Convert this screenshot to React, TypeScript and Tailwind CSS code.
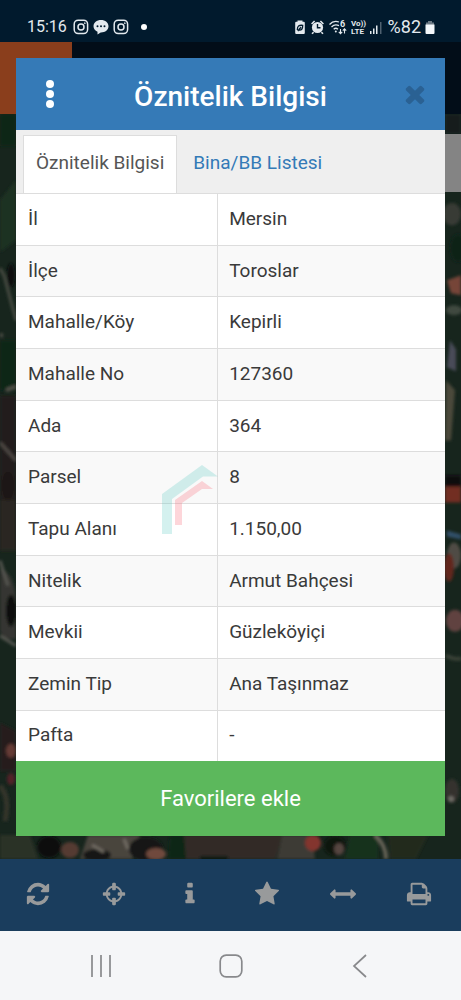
import type { ReactNode } from "react";

const rows = [
  ["İl", "Mersin"],
  ["İlçe", "Toroslar"],
  ["Mahalle/Köy", "Kepirli"],
  ["Mahalle No", "127360"],
  ["Ada", "364"],
  ["Parsel", "8"],
  ["Tapu Alanı", "1.150,00"],
  ["Nitelik", "Armut Bahçesi"],
  ["Mevkii", "Güzleköyiçi"],
  ["Zemin Tip", "Ana Taşınmaz"],
  ["Pafta", "-"],
];

const tools = [
  {
    label: "Yenile",
    path: "M1639 1056q0 5-1 7-64 268-268 434.5t-478 166.5q-146 0-282.5-55t-243.500-157l-129 129q-19 19-45 19t-45-19-19-45v-448q0-26 19-45t45-19h448q26 0 45 19t19 45-19 45l-137 137q71 66 161 102t187 36q134 0 250-65t186-179q11-17 53-117 8-23 30-23h192q13 0 22.5 9.5t9.5 22.5zm25-800v448q0 26-19 45t-45 19h-448q-26 0-45-19t-19-45 19-45l138-138q-148-137-349-137-134 0-250 65t-186 179q-11 17-53 117-8 23-30 23h-199q-13 0-22.5-9.5t-9.5-22.5v-7q65-268 270-434.5t480-166.5q146 0 284 55.5t245 156.5l130-129q19-19 45-19t45 19 19 45z",
  },
  {
    label: "Konum",
    path: "M1325 1024h-109q-26 0-45-19t-19-45v-128q0-26 19-45t45-19h109q-32-108-112.5-188.500t-188.500-112.500v109q0 26-19 45t-45 19h-128q-26 0-45-19t-19-45v-109q-108 32-188.500 112.500t-112.500 188.500h109q26 0 45 19t19 45v128q0 26-19 45t-45 19h-109q32 108 112.500 188.500t188.500 112.500v-109q0-26 19-45t45-19h128q26 0 45 19t19 45v109q108-32 188.500-112.500t112.500-188.500zm339-192v128q0 26-19 45t-45 19h-143q-37 161-154.500 278.500t-278.500 154.500v143q0 26-19 45t-45 19h-128q-26 0-45-19t-19-45v-143q-161-37-278.500-154.500t-154.500-278.500h-143q-26 0-45-19t-19-45v-128q0-26 19-45t45-19h143q37-161 154.500-278.500t278.500-154.500v-143q0-26 19-45t45-19h128q26 0 45 19t19 45v143q161 37 278.500 154.500t154.500 278.500h143q26 0 45 19t19 45z",
  },
  {
    label: "Bilgi",
    path: "M1216 1344v128q0 26-19 45t-45 19h-512q-26 0-45-19t-19-45v-128q0-26 19-45t45-19h64v-384h-64q-26 0-45-19t-19-45v-128q0-26 19-45t45-19h384q26 0 45 19t19 45v576h64q26 0 45 19t19 45zm-128-1152v192q0 26-19 45t-45 19h-256q-26 0-45-19t-19-45v-192q0-26 19-45t45-19h256q26 0 45 19t19 45z",
  },
  {
    label: "Favoriler",
    path: "M1728 647q0 22-26 48l-363 354 86 500q1 7 1 20 0 21-10.5 35.5t-30.500 14.500q-19 0-40-12l-449-236-449 236q-22 12-40 12-21 0-31.500-14.500t-10.500-35.500q0-6 2-20l86-500-364-354q-25-27-25-48 0-37 56-46l502-73 225-455q19-41 49-41t49 41l225 455 502 73q56 9 56 46z",
  },
  {
    label: "Ölçüm",
    path: "M1792 896q0 26-19 45l-256 256q-19 19-45 19t-45-19-19-45v-128h-1024v128q0 26-19 45t-45 19-45-19l-256-256q-19-19-19-45t19-45l256-256q19-19 45-19t45 19 19 45v128h1024v-128q0-26 19-45t45-19 45 19l256 256q19 19 19 45z",
  },
  {
    label: "Yazdır",
    path: "M448 1536h896v-256h-896v256zm0-640h896v-384h-160q-40 0-68-28t-28-68v-160h-640v640zm1152 64q0-26-19-45t-45-19-45 19-19 45 19 45 45 19 45-19 19-45zm128 0v416q0 13-9.500 22.500t-22.500 9.500h-224v160q0 40-28 68t-68 28h-960q-40 0-68-28t-28-68v-160h-224q-13 0-22.500-9.500t-9.500-22.500v-416q0-79 56.500-135.500t135.500-56.500h64v-544q0-40 28-68t68-28h672q40 0 88 20t76 48l152 152q28 28 48 76t20 88v256h64q79 0 135.500 56.500t56.500 135.500z",
  },
];

const closePath =
  "M1490 1322q0 40-28 68l-136 136q-28 28-68 28t-68-28l-294-294-294 294q-28 28-68 28t-68-28l-136-136q-28-28-28-68t28-68l294-294-294-294q-28-28-28-68t28-68l136-136q28-28 68-28t68 28l294 294 294-294q28-28 68-28t68 28l136 136q28 28 28 68t-28 68l-294 294 294 294q28 28 28 68z";

function Glyph({ path, className }: { path: string; className: string }) {
  return (
    <svg viewBox="0 0 1792 1792" fill="currentColor" className={className} aria-hidden="true">
      <path d={path} />
    </svg>
  );
}

function InstagramIcon() {
  return (
    <svg viewBox="0 0 16 16" className="size-4" fill="none" stroke="currentColor" strokeWidth="1.5" aria-hidden="true">
      <rect x="1.2" y="1.2" width="13.400" height="13.400" rx="4" />
      <circle cx="8" cy="8" r="3" />
      <circle cx="11.800" cy="4.200" r="0.500" fill="currentColor" strokeWidth="0.800" />
    </svg>
  );
}

function StatusBar() {
  return (
    <div className="h-[42px] bg-[#011a2d] pt-3 pl-[27px] pr-[26px] flex justify-between text-[#e3e9ee]">
      <div className="flex items-center h-[30px]">
        <span className="text-[16px] leading-5 w-[46px]">15:16</span>
        <div className="flex items-center gap-1">
          <InstagramIcon />
          <svg viewBox="0 0 16 16" className="size-4" fill="currentColor" aria-hidden="true">
            <path d="M8 1C3.700 1 .5 3.700.5 7.200c0 2.500 1.600 4.500 4 5.500v2.800l3.200-2.100C12.200 13.500 15.500 10.800 15.500 7.200 15.500 3.700 12.300 1 8 1z" />
            <g fill="#011a2d">
              <circle cx="4.500" cy="7.300" r="1" />
              <circle cx="8" cy="7.300" r="1" />
              <circle cx="11.500" cy="7.300" r="1" />
            </g>
          </svg>
          <InstagramIcon />
        </div>
        <span className="ml-3 size-[6px] rounded-full bg-white" />
      </div>
      <div className="flex items-center h-[30px]">
        <svg viewBox="0 0 90 16" className="w-[90px] h-4" fill="currentColor" aria-hidden="true">
          <path d="M3.500 1.500h5v1.300h1.300a1 1 0 0 1 1 1V14a1 1 0 0 1-1 1H2.200a1 1 0 0 1-1-1V3.800a1 1 0 0 1 1-1h1.300z" />
          <path d="M3.300 11c0-4 1.500-5 5.400-4.700C8.800 10 7.500 11.500 4.700 10.900L3.800 12M4.700 10.700 7 8.300" fill="none" stroke="#011a2d" strokeWidth="1.300" />
          <circle cx="23.500" cy="8.500" r="5.600" />
          <path d="m17.600 5 3-3M29.400 5l-3-3M19.600 13.200 18 14.800M27.400 13.200l1.600 1.600" stroke="currentColor" strokeWidth="1.600" />
          <path d="M23.500 5v3.800h3" fill="none" stroke="#011a2d" strokeWidth="1.400" />
          <g fill="none" stroke="currentColor" strokeWidth="1.300">
            <path d="M35.500 5.500c2.500-2.800 6.500-3.500 9.500-2.500M37.500 8c2-2 5-2.500 7.500-1.300M39.700 10.300c1.200-1.200 3-1.200 4.200 0" />
            <path d="M46.500 10v4.500M44.800 12.800l1.700 1.900 1.700-1.900M50.500 14.500V10M48.800 11.600l1.700-1.900 1.700 1.900" strokeWidth="1.100" />
          </g>
          <circle cx="41.800" cy="12.500" r="1" />
          <text x="46" y="8" fontSize="9" fontWeight="700" fontFamily="Roboto, sans-serif">6</text>
          <text x="57" y="7" fontSize="8" fontWeight="700" fontFamily="Roboto, sans-serif">Vo))</text>
          <text x="57" y="15" fontSize="8" fontWeight="700" fontFamily="Roboto, sans-serif">LTE</text>
          <path d="M76 12h1.500v3H76zM79 9.500h1.500V15H79zM82 6.500h1.500V15H82z" />
          <path d="M86 3h1.500v12H86z" opacity="0.350" />
        </svg>
        <span className="text-[18px] leading-5 ml-1">%82</span>
        <svg viewBox="0 0 10 16" className="w-[10px] h-4 ml-1" aria-hidden="true">
          <path d="M3 2h4v1.500h2V6H1V3.500h2z" fill="#6c7984" />
          <path d="M.5 5.500h9V14a1 1 0 0 1-1 1h-7a1 1 0 0 1-1-1z" fill="#f4f7fa" />
        </svg>
      </div>
    </div>
  );
}

// Dimmed aerial imagery behind the dialog
function SatelliteMap() {
  return (
    <svg viewBox="0 114 461 744" preserveAspectRatio="none" className="absolute inset-0 size-full" aria-hidden="true">
      <defs>
        <filter id="soft" x="-5%" y="-5%" width="110%" height="110%">
          <feGaussianBlur stdDeviation="1.800" />
        </filter>
      </defs>
      <rect y="114" width="461" height="744" fill="#17251d" />
      <g filter="url(#soft)">
        <path d="M0 114h16v32H0zM0 340h16v50H0z" fill="#0b2619" />
        <path d="M0 395h16v130H0z" fill="#241f1c" />
        <path d="M0 200 16 180v60l-16 12z" fill="#1c3021" />
        <path d="M0 268 4 275 16 320" stroke="#474c42" strokeWidth="3" fill="none" />
        <path d="M0 442 16 460" stroke="#4f4945" strokeWidth="3" fill="none" />
        <path d="M0 335h3M6 390l10-4" stroke="#4f4f46" strokeWidth="4" />
        <ellipse cx="11" cy="275" rx="4" ry="12" fill="#090e10" />
        <ellipse cx="8" cy="485" rx="6" ry="14" fill="#1e1512" />
        <path d="M0 500h16v50H0z" fill="#292520" />
        <path d="M0 568q14 4 16 30v40Q2 640 0 630z" fill="#343630" />
        <ellipse cx="11" cy="610" rx="5" ry="16" fill="#0c0e0d" />
        <path d="M0 560 8 585M0 635l16 10" stroke="#565751" strokeWidth="3" />
        <path d="M0 722 16 730v40H0z" fill="#251e1b" />
        <ellipse cx="11" cy="750" rx="5" ry="7" fill="#653b36" />
        <ellipse cx="11" cy="778" rx="4" ry="6" fill="#512027" />
        <path d="M0 785q10 10 5 35" stroke="#35352a" strokeWidth="5" fill="none" />
        <path d="M445 114h16v20h-16z" fill="#171d1c" />
        <ellipse cx="452" cy="214" rx="9" ry="11" fill="#393b35" />
        <ellipse cx="458" cy="248" rx="8" ry="14" fill="#0d2117" />
        <path d="m447 280 14-5v20l-10-2z" fill="#764439" />
        <ellipse cx="454" cy="310" rx="8" ry="5" fill="#414940" />
        <path d="m450 340 6 9v22l-9-4z" fill="#484c58" />
        <path d="m446 380 9 10-4 50h-6z" fill="#4b493a" />
        <path d="M445 475h16v11h-16z" fill="#0f0c11" />
        <path d="M445 486h16v16h-16z" fill="#722e22" />
        <path d="M447 530 461 534v5l-14-3z" fill="#315069" />
        <ellipse cx="454" cy="555" rx="7" ry="13" fill="#504c45" />
        <ellipse cx="449" cy="567" rx="5" ry="14" fill="#62251f" />
        <ellipse cx="455" cy="620" rx="9" ry="11" fill="#60423f" />
        <path d="M446 655q12 5 15 2" stroke="#3a4338" strokeWidth="4" fill="none" />
        <ellipse cx="452" cy="790" rx="7" ry="12" fill="#34332e" />
        <ellipse cx="451" cy="798" rx="3" ry="3" fill="#6e6b65" />
        <path d="M0 834h30l8 24H0z" fill="#2b3025" />
        <path d="M88 834h52l-8 24H80z" fill="#49443e" />
        <ellipse cx="49" cy="846" rx="12" ry="11" fill="#080d0a" />
        <ellipse cx="70" cy="849" rx="9" ry="8" fill="#553a31" />
        <ellipse cx="97" cy="854" rx="14" ry="6" fill="#161912" />
        <path d="m92 844 12 7M124 838l4 10" stroke="#716c63" strokeWidth="3" />
        <ellipse cx="146" cy="848" rx="17" ry="12" fill="#121713" />
        <ellipse cx="156" cy="853" rx="10" ry="6" fill="#704a3e" />
        <path d="M170 834h18v24h-20z" fill="#102814" />
        <path d="M184 834h98l-6 24h-90z" fill="#332b27" />
        <path d="M200 857h28" stroke="#111411" strokeWidth="4" />
        <path d="M282 834h30l3 24h-38z" fill="#3c3b35" />
        <ellipse cx="313" cy="842" rx="8" ry="8" fill="#83342d" />
        <ellipse cx="335" cy="845" rx="11" ry="10" fill="#10120f" />
        <ellipse cx="339" cy="848" rx="5" ry="6" fill="#544540" />
        <path d="M350 834h28v24h-33z" fill="#17311d" />
        <path d="M375 834q11 10 11 24" stroke="#666356" strokeWidth="4" fill="none" />
        <path d="M388 834h40l-12 24h-26z" fill="#24291f" />
      </g>
    </svg>
  );
}

function Toolbar() {
  return (
    <div className="h-[72px] bg-[#1a3d5d] pr-1 pb-[2px] grid grid-cols-6 text-[#989a9b]">
      {tools.map((tool) => (
        <button key={tool.label} type="button" aria-label={tool.label} className="flex items-center justify-center">
          <Glyph path={tool.path} className="size-[26px]" />
        </button>
      ))}
    </div>
  );
}

function NavButton({ label, children }: { label: string; children: ReactNode }) {
  return (
    <button type="button" aria-label={label} className="flex w-[130px] items-center justify-center">
      <svg viewBox="0 0 24 24" className="size-6" fill="none" stroke="#88898c" strokeWidth="1.700" aria-hidden="true">
        {children}
      </svg>
    </button>
  );
}

function SystemNav() {
  return (
    <div className="h-[69px] bg-[#f5f6f8] flex justify-center">
      <NavButton label="Son uygulamalar">
        <path d="M3 1v22M12 1v22M21 1v22" />
      </NavButton>
      <NavButton label="Ana ekran">
        <rect x="1.200" y="1.200" width="21.600" height="21.600" rx="6" />
      </NavButton>
      <NavButton label="Geri">
        <path d="M17 1 5 12l12 11" />
      </NavButton>
    </div>
  );
}

function AttributeTable() {
  return (
    <div className="relative">
      <table className="w-full h-[568px] table-fixed border-collapse text-[19px] leading-6 text-[#3a3a3a]">
        <tbody>
          {rows.map(([name, value]) => (
            <tr key={name} className="odd:bg-white even:bg-[#f9f9f9] border-t border-[#ddd]">
              <th scope="row" className="w-[47%] pl-3 pb-px text-left font-normal border-r border-[#ddd]">
                {name}
              </th>
              <td className="pl-[11px] pb-px">{value}</td>
            </tr>
          ))}
        </tbody>
      </table>
      <svg viewBox="0 0 56 70" className="pointer-events-none absolute left-[146px] top-[272px] w-14 h-[70px]" aria-hidden="true">
        <path d="M0 69V29L40 0l16 11.500H41L10 34v35z" fill="#61cdc3" opacity="0.270" />
        <path d="M13 60V35l27-19 11 8H40L20 38v22z" fill="#fa7683" opacity="0.300" />
      </svg>
    </div>
  );
}

function AttributeDialog() {
  return (
    <section role="dialog" aria-label="Öznitelik Bilgisi" className="absolute inset-x-4 top-[58px] bg-white">
      <header className="h-[72px] bg-[#357ab7] flex items-center pl-4 pr-3 text-white">
        <button type="button" aria-label="Menü" className="flex w-9 flex-col items-center gap-[2px]">
          <span className="size-2 rounded-full bg-white" />
          <span className="size-2 rounded-full bg-white" />
          <span className="size-2 rounded-full bg-white" />
        </button>
        <h1 className="flex-1 pt-[6px] pr-1 text-center text-[28px] leading-9 font-medium">Öznitelik Bilgisi</h1>
        <button type="button" aria-label="Kapat" className="flex w-9 justify-center text-[#2a6193]">
          <Glyph path={closePath} className="size-7 shrink-0" />
        </button>
      </header>
      <div role="tablist" className="h-[63px] bg-[#efefef] pt-[5px] pl-[7px] flex text-[19px] leading-6">
        <button
          type="button"
          role="tab"
          aria-selected="true"
          className="px-3 pb-1 bg-white border border-b-0 border-[#ddd] text-[#555]"
        >
          Öznitelik Bilgisi
        </button>
        <button
          type="button"
          role="tab"
          aria-selected="false"
          className="px-[15px] pb-1 border border-b-0 border-transparent text-[#337ab7]"
        >
          Bina/BB Listesi
        </button>
      </div>
      <AttributeTable />
      <button type="button" className="h-[75px] w-full bg-[#5cb85c] text-[22px] leading-7 text-white">
        Favorilere ekle
      </button>
    </section>
  );
}

export default function App() {
  return (
    <div className="relative flex min-h-screen flex-col font-[Roboto,'Noto_Sans',sans-serif]">
      <StatusBar />
      <div className="h-[72px] bg-[#020d18]">
        <div className="h-full w-[72px] bg-[#8a3e1c]" />
      </div>
      <div className="relative flex flex-1 items-start justify-end pt-5">
        <SatelliteMap />
        <div className="relative h-[58px] w-10 bg-[#848484]" />
      </div>
      <Toolbar />
      <SystemNav />
      <AttributeDialog />
    </div>
  );
}
